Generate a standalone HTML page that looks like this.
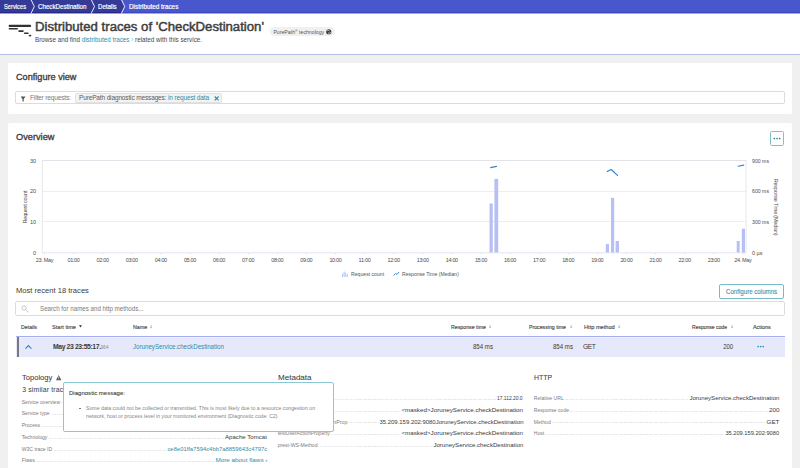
<!DOCTYPE html>
<html><head><meta charset="utf-8">
<style>
*{box-sizing:border-box;margin:0;padding:0}
html,body{width:800px;height:468px;overflow:hidden}
body{background:#f0f0f0;font-family:"Liberation Sans",sans-serif;color:#454646;position:relative}
.a{position:absolute;white-space:nowrap}
.card{position:absolute;left:8px;width:784px;background:#fff;border-radius:2px}
.inp{position:absolute;border:1px solid #dcdcdc;border-radius:2px;background:#fff}
.dots{position:absolute;height:1px;background:repeating-linear-gradient(90deg,#e9e9e9 0,#e9e9e9 1.5px,#f9f9f9 1.5px,#f9f9f9 2.5px)}
.teal{color:#2c8fa8}
</style></head><body>

<svg class="a" style="left:0;top:0" width="800" height="14">
<rect x="0" y="0" width="800" height="12" fill="#4858cc"/>
<rect x="0" y="12" width="800" height="1" fill="#3a48c6"/>
<rect x="0" y="13" width="800" height="1" fill="#a3aae2"/>
<polygon points="0,0 121.4,0 124.7,6.5 121.4,13 0,13" fill="#353a96"/>
<rect x="0" y="12" width="121.5" height="1" fill="#23298a"/>
<rect x="0" y="13" width="121.5" height="1" fill="#9da0cc"/>
<polyline points="31,-0.5 34.3,6.5 31,13.5" fill="none" stroke="#fff" stroke-width="0.9"/>
<polyline points="91.2,-0.5 94.5,6.5 91.2,13.5" fill="none" stroke="#fff" stroke-width="0.9"/>
<polyline points="121.4,-0.5 124.7,6.5 121.4,13.5" fill="none" stroke="#fff" stroke-width="0.9"/>
</svg>
<div class="a" style="left:0;top:14px;width:800px;height:40px;background:#fff"></div>
<div class="a" style="left:0;top:54px;width:800px;height:1px;background:#b8bfe6"></div>

<div class="a" style="top:2.80px;font-size:7.00px;line-height:7.00px;color:#fff;transform:scaleX(0.8196);transform-origin:left;left:4.00px;-webkit-text-stroke:0.2px #fff;">Services</div>
<div class="a" style="top:2.80px;font-size:7.00px;line-height:7.00px;color:#fff;transform:scaleX(0.8840);transform-origin:left;left:37.70px;-webkit-text-stroke:0.2px #fff;">CheckDestination</div>
<div class="a" style="top:2.80px;font-size:7.00px;line-height:7.00px;color:#fff;transform:scaleX(0.8693);transform-origin:left;left:98.00px;-webkit-text-stroke:0.2px #fff;">Details</div>
<div class="a" style="top:2.80px;font-size:7.00px;line-height:7.00px;color:#fff;transform:scaleX(0.9052);transform-origin:left;left:128.50px;-webkit-text-stroke:0.2px #fff;">Distributed traces</div>
<svg class="a" style="left:0;top:13px" width="40" height="41">
<rect x="8.6" y="11.8" width="22.5" height="2.1" rx="1" fill="#333"/>
<rect x="8.6" y="15" width="9.4" height="1.6" rx="0.8" fill="#333"/>
<rect x="18.2" y="17.3" width="5.6" height="1.6" rx="0.8" fill="#333"/>
<rect x="23.8" y="19.5" width="4.9" height="1.6" rx="0.8" fill="#333"/>
<rect x="28.7" y="21.8" width="2.6" height="1.6" rx="0.8" fill="#333"/>
</svg>
<div class="a" style="top:20.20px;font-size:12.30px;line-height:14.00px;color:#3d3d3d;transform:scaleX(1.0706);transform-origin:left;left:35.00px;-webkit-text-stroke:0.45px #3d3d3d;">Distributed traces of 'CheckDestination'</div>
<div class="a" style="top:35.60px;font-size:6.50px;line-height:7.00px;color:#454646;transform:scaleX(0.9650);transform-origin:left;left:35.00px;">Browse and find <span class="teal">distributed traces</span> <span style="color:#7fc0d0">&#8250;</span> related with this service.</div>
<div class="a" style="left:269.7px;top:27.4px;width:65.6px;height:8.8px;border-radius:4.4px;background:#f0f0f0"></div>
<div class="a" style="left:273.4px;top:27.4px;font-size:5.2px;line-height:8.8px;color:#555">PurePath<span style="font-size:3.5px;vertical-align:1.5px">&#174;</span> technology</div>
<svg class="a" style="left:325.8px;top:28.8px" width="6" height="6"><circle cx="2.75" cy="2.75" r="2.6" fill="#333"/><path d="M0.8,2.2 C1.5,1.2 3,1 3.6,2 M1.9,3.5 C2.5,4.5 4,4.3 4.7,3.3" fill="none" stroke="#f0f0f0" stroke-width="0.8"/></svg>

<div class="card" style="top:63px;height:51.3px"></div>
<div class="a" style="top:72.00px;font-size:8.85px;line-height:10.00px;color:#3a3a3a;transform:scaleX(1.0335);transform-origin:left;left:15.80px;-webkit-text-stroke:0.3px #3a3a3a;">Configure view</div>
<div class="inp" style="left:15.4px;top:91.3px;width:769.6px;height:13.2px"></div>
<svg class="a" style="left:20px;top:95.5px" width="7" height="7"><path d="M0.6,0.6 H5.6 L3.7,3 V5.6 H2.5 V3 Z" fill="#555"/></svg>
<div class="a" style="left:30px;top:93.5px;font-size:6.7px;letter-spacing:-0.22px;line-height:8px;color:#7a7a7a">Filter requests:</div>
<div class="a" style="left:75px;top:93px;width:146.6px;height:9.6px;background:#f3f3f3;border:1px solid #e0e0e0;border-radius:1.5px"></div>
<div class="a" style="left:79px;top:93.7px;font-size:6.5px;letter-spacing:-0.14px;line-height:8px;color:#5a5a5a">PurePath diagnostic messages: <span class="teal">in request data</span></div>
<svg class="a" style="left:213.5px;top:95.5px" width="6" height="5"><path d="M0.7,0.5 L4.6,4.4 M4.6,0.5 L0.7,4.4" stroke="#2c8fa8" stroke-width="1.1"/></svg>

<div class="card" style="top:123.3px;height:360px"></div>
<div class="a" style="top:131.70px;font-size:8.85px;line-height:10.00px;color:#3a3a3a;transform:scaleX(1.0439);transform-origin:left;left:15.80px;-webkit-text-stroke:0.3px #3a3a3a;">Overview</div>
<div class="a" style="left:770px;top:131px;width:14px;height:14.5px;border:1px solid #86bfcc;border-radius:1.5px"></div>
<svg class="a" style="left:773px;top:136.5px" width="9" height="3"><circle cx="1.3" cy="1.5" r="0.85" fill="#2b7f94"/><circle cx="4" cy="1.5" r="0.85" fill="#2b7f94"/><circle cx="6.7" cy="1.5" r="0.85" fill="#2b7f94"/></svg>
<svg class="a" style="left:0;top:150px" width="800" height="120">
<rect x="42" y="10" width="704" height="1" fill="#e2e3e8"/>
<rect x="42" y="41" width="704" height="1" fill="#eeeeee"/>
<rect x="42" y="71" width="704" height="1" fill="#eeeeee"/>
<rect x="42" y="102.3" width="704" height="1" fill="#e2e7f0"/>
<rect x="41.8" y="10" width="0.9" height="93" fill="#e4e6ec"/>
<rect x="745.6" y="10" width="0.9" height="93" fill="#e4e6ec"/>
<rect x="44.25" y="103" width="0.7" height="1.5" fill="#d8dde6"/>
<rect x="73.35" y="103" width="0.7" height="1.5" fill="#d8dde6"/>
<rect x="102.45" y="103" width="0.7" height="1.5" fill="#d8dde6"/>
<rect x="131.55" y="103" width="0.7" height="1.5" fill="#d8dde6"/>
<rect x="160.65" y="103" width="0.7" height="1.5" fill="#d8dde6"/>
<rect x="189.75" y="103" width="0.7" height="1.5" fill="#d8dde6"/>
<rect x="218.85" y="103" width="0.7" height="1.5" fill="#d8dde6"/>
<rect x="247.95" y="103" width="0.7" height="1.5" fill="#d8dde6"/>
<rect x="277.05" y="103" width="0.7" height="1.5" fill="#d8dde6"/>
<rect x="306.15" y="103" width="0.7" height="1.5" fill="#d8dde6"/>
<rect x="335.25" y="103" width="0.7" height="1.5" fill="#d8dde6"/>
<rect x="364.35" y="103" width="0.7" height="1.5" fill="#d8dde6"/>
<rect x="393.45" y="103" width="0.7" height="1.5" fill="#d8dde6"/>
<rect x="422.55" y="103" width="0.7" height="1.5" fill="#d8dde6"/>
<rect x="451.65" y="103" width="0.7" height="1.5" fill="#d8dde6"/>
<rect x="480.75" y="103" width="0.7" height="1.5" fill="#d8dde6"/>
<rect x="509.85" y="103" width="0.7" height="1.5" fill="#d8dde6"/>
<rect x="538.95" y="103" width="0.7" height="1.5" fill="#d8dde6"/>
<rect x="568.05" y="103" width="0.7" height="1.5" fill="#d8dde6"/>
<rect x="597.15" y="103" width="0.7" height="1.5" fill="#d8dde6"/>
<rect x="626.25" y="103" width="0.7" height="1.5" fill="#d8dde6"/>
<rect x="655.35" y="103" width="0.7" height="1.5" fill="#d8dde6"/>
<rect x="684.45" y="103" width="0.7" height="1.5" fill="#d8dde6"/>
<rect x="713.55" y="103" width="0.7" height="1.5" fill="#d8dde6"/>
<rect x="742.65" y="103" width="0.7" height="1.5" fill="#d8dde6"/>
<rect x="489.5" y="53.5" width="3.3" height="49.0" fill="#b7c0f4"/>
<rect x="494.4" y="28.9" width="3.8" height="73.6" fill="#b7c0f4"/>
<rect x="605.8" y="94.0" width="3.2" height="8.5" fill="#b7c0f4"/>
<rect x="611.0" y="47.8" width="3.2" height="54.7" fill="#b7c0f4"/>
<rect x="615.6" y="91.0" width="3.4" height="11.5" fill="#b7c0f4"/>
<rect x="736.7" y="91.0" width="3.0" height="11.5" fill="#b7c0f4"/>
<rect x="741.8" y="78.7" width="3.2" height="23.8" fill="#b7c0f4"/>
<polyline points="490.7,17.6 496.5,16.4" fill="none" stroke="#3a80cc" stroke-width="1.15" stroke-linecap="round" stroke-linejoin="round"/>
<polyline points="607.2,21.6 611.2,19.5 617.5,25.4" fill="none" stroke="#3a80cc" stroke-width="1.15" stroke-linecap="round" stroke-linejoin="round"/>
<polyline points="738.1,16.2 743.7,15.1" fill="none" stroke="#3a80cc" stroke-width="1.15" stroke-linecap="round" stroke-linejoin="round"/>
</svg>
<div class="a" style="top:256.90px;font-size:5.50px;line-height:6.00px;color:#4d4d4d;left:44.44px;width:60px;margin-left:-30px;text-align:center;letter-spacing:-0.32px;">23. May</div>
<div class="a" style="top:256.90px;font-size:5.50px;line-height:6.00px;color:#4d4d4d;left:73.52px;width:60px;margin-left:-30px;text-align:center;letter-spacing:-0.35px;">01:00</div>
<div class="a" style="top:256.90px;font-size:5.50px;line-height:6.00px;color:#4d4d4d;left:102.62px;width:60px;margin-left:-30px;text-align:center;letter-spacing:-0.35px;">02:00</div>
<div class="a" style="top:256.90px;font-size:5.50px;line-height:6.00px;color:#4d4d4d;left:131.72px;width:60px;margin-left:-30px;text-align:center;letter-spacing:-0.35px;">03:00</div>
<div class="a" style="top:256.90px;font-size:5.50px;line-height:6.00px;color:#4d4d4d;left:160.82px;width:60px;margin-left:-30px;text-align:center;letter-spacing:-0.35px;">04:00</div>
<div class="a" style="top:256.90px;font-size:5.50px;line-height:6.00px;color:#4d4d4d;left:189.92px;width:60px;margin-left:-30px;text-align:center;letter-spacing:-0.35px;">05:00</div>
<div class="a" style="top:256.90px;font-size:5.50px;line-height:6.00px;color:#4d4d4d;left:219.02px;width:60px;margin-left:-30px;text-align:center;letter-spacing:-0.35px;">06:00</div>
<div class="a" style="top:256.90px;font-size:5.50px;line-height:6.00px;color:#4d4d4d;left:248.12px;width:60px;margin-left:-30px;text-align:center;letter-spacing:-0.35px;">07:00</div>
<div class="a" style="top:256.90px;font-size:5.50px;line-height:6.00px;color:#4d4d4d;left:277.22px;width:60px;margin-left:-30px;text-align:center;letter-spacing:-0.35px;">08:00</div>
<div class="a" style="top:256.90px;font-size:5.50px;line-height:6.00px;color:#4d4d4d;left:306.32px;width:60px;margin-left:-30px;text-align:center;letter-spacing:-0.35px;">09:00</div>
<div class="a" style="top:256.90px;font-size:5.50px;line-height:6.00px;color:#4d4d4d;left:335.42px;width:60px;margin-left:-30px;text-align:center;letter-spacing:-0.35px;">10:00</div>
<div class="a" style="top:256.90px;font-size:5.50px;line-height:6.00px;color:#4d4d4d;left:364.56px;width:60px;margin-left:-30px;text-align:center;letter-spacing:-0.27px;">11:00</div>
<div class="a" style="top:256.90px;font-size:5.50px;line-height:6.00px;color:#4d4d4d;left:393.62px;width:60px;margin-left:-30px;text-align:center;letter-spacing:-0.35px;">12:00</div>
<div class="a" style="top:256.90px;font-size:5.50px;line-height:6.00px;color:#4d4d4d;left:422.72px;width:60px;margin-left:-30px;text-align:center;letter-spacing:-0.35px;">13:00</div>
<div class="a" style="top:256.90px;font-size:5.50px;line-height:6.00px;color:#4d4d4d;left:451.82px;width:60px;margin-left:-30px;text-align:center;letter-spacing:-0.35px;">14:00</div>
<div class="a" style="top:256.90px;font-size:5.50px;line-height:6.00px;color:#4d4d4d;left:480.92px;width:60px;margin-left:-30px;text-align:center;letter-spacing:-0.35px;">15:00</div>
<div class="a" style="top:256.90px;font-size:5.50px;line-height:6.00px;color:#4d4d4d;left:510.02px;width:60px;margin-left:-30px;text-align:center;letter-spacing:-0.35px;">16:00</div>
<div class="a" style="top:256.90px;font-size:5.50px;line-height:6.00px;color:#4d4d4d;left:539.12px;width:60px;margin-left:-30px;text-align:center;letter-spacing:-0.35px;">17:00</div>
<div class="a" style="top:256.90px;font-size:5.50px;line-height:6.00px;color:#4d4d4d;left:568.22px;width:60px;margin-left:-30px;text-align:center;letter-spacing:-0.35px;">18:00</div>
<div class="a" style="top:256.90px;font-size:5.50px;line-height:6.00px;color:#4d4d4d;left:597.32px;width:60px;margin-left:-30px;text-align:center;letter-spacing:-0.35px;">19:00</div>
<div class="a" style="top:256.90px;font-size:5.50px;line-height:6.00px;color:#4d4d4d;left:626.42px;width:60px;margin-left:-30px;text-align:center;letter-spacing:-0.35px;">20:00</div>
<div class="a" style="top:256.90px;font-size:5.50px;line-height:6.00px;color:#4d4d4d;left:655.52px;width:60px;margin-left:-30px;text-align:center;letter-spacing:-0.35px;">21:00</div>
<div class="a" style="top:256.90px;font-size:5.50px;line-height:6.00px;color:#4d4d4d;left:684.62px;width:60px;margin-left:-30px;text-align:center;letter-spacing:-0.35px;">22:00</div>
<div class="a" style="top:256.90px;font-size:5.50px;line-height:6.00px;color:#4d4d4d;left:713.72px;width:60px;margin-left:-30px;text-align:center;letter-spacing:-0.35px;">23:00</div>
<div class="a" style="top:256.90px;font-size:5.50px;line-height:6.00px;color:#4d4d4d;left:742.84px;width:60px;margin-left:-30px;text-align:center;letter-spacing:-0.32px;">24. May</div>
<div class="a" style="top:157.70px;font-size:5.50px;line-height:6.00px;color:#4d4d4d;right:764.00px;">30</div>
<div class="a" style="top:188.40px;font-size:5.50px;line-height:6.00px;color:#4d4d4d;right:764.00px;">20</div>
<div class="a" style="top:219.00px;font-size:5.50px;line-height:6.00px;color:#4d4d4d;right:764.00px;">10</div>
<div class="a" style="top:249.70px;font-size:5.50px;line-height:6.00px;color:#4d4d4d;right:764.00px;">0</div>
<div class="a" style="top:157.70px;font-size:5.50px;line-height:6.00px;color:#4d4d4d;transform:scaleX(0.9425);transform-origin:left;left:752.00px;">900 ms</div>
<div class="a" style="top:188.40px;font-size:5.50px;line-height:6.00px;color:#4d4d4d;transform:scaleX(0.9425);transform-origin:left;left:752.00px;">600 ms</div>
<div class="a" style="top:219.00px;font-size:5.50px;line-height:6.00px;color:#4d4d4d;transform:scaleX(0.9425);transform-origin:left;left:752.00px;">300 ms</div>
<div class="a" style="top:249.70px;font-size:5.50px;line-height:6.00px;color:#4d4d4d;left:752.00px;">0 µs</div>
<div class="a" style="left:25px;top:206.5px;width:60px;margin-left:-30px;margin-top:-3px;text-align:center;line-height:6px;font-size:5.5px;letter-spacing:-0.2px;color:#4d4d4d;transform:rotate(-90deg)">Request count</div>
<div class="a" style="left:776px;top:206.6px;width:80px;margin-left:-40px;margin-top:-3px;text-align:center;line-height:6px;font-size:5.5px;letter-spacing:-0.22px;color:#4d4d4d;transform:rotate(90deg)">Response Time (Median)</div>
<svg class="a" style="left:342px;top:271px" width="8" height="6"><rect x="0" y="2.5" width="1" height="3.5" fill="#b7c0f4"/><rect x="1.6" y="0.5" width="1" height="5.5" fill="#b7c0f4"/><rect x="3.2" y="1.5" width="1" height="4.5" fill="#b7c0f4"/><rect x="4.8" y="3" width="1" height="3" fill="#b7c0f4"/></svg>
<svg class="a" style="left:393px;top:271px" width="8" height="6"><polyline points="0.5,4.5 2.5,2.5 4,3.5 6,1" fill="none" stroke="#2e7fcf" stroke-width="0.9"/></svg>
<div class="a" style="top:271.00px;font-size:5.17px;line-height:6.00px;color:#555;transform:scaleX(0.9958);transform-origin:left;left:350.60px;">Request count</div>
<div class="a" style="top:271.00px;font-size:5.17px;line-height:6.00px;color:#555;transform:scaleX(0.9869);transform-origin:left;left:402.00px;">Response Time (Median)</div>
<div class="a" style="top:286.00px;font-size:7.70px;line-height:9.00px;color:#3c3c3c;transform:scaleX(0.9860);transform-origin:left;left:16.00px;">Most recent 18 traces</div>
<div class="a" style="left:719.2px;top:284.3px;width:65.3px;height:14.4px;border:1px solid #79b9c8;border-radius:2px"></div>
<div class="a" style="top:287.70px;font-size:7.10px;line-height:8.00px;color:#3f93a8;transform:scaleX(0.8649);transform-origin:left;left:726.00px;-webkit-text-stroke:0.12px #3f93a8;">Configure columns</div>
<div class="inp" style="left:15.3px;top:301.2px;width:769.3px;height:15px"></div>
<svg class="a" style="left:21px;top:305px" width="9" height="9"><circle cx="3" cy="3" r="2.1" fill="none" stroke="#bbb" stroke-width="0.8"/><line x1="4.6" y1="4.6" x2="7.6" y2="7.4" stroke="#bbb" stroke-width="0.9"/></svg>
<div class="a" style="top:304.80px;font-size:6.60px;line-height:7.00px;color:#7a7a7a;transform:scaleX(0.9382);transform-origin:left;left:39.80px;">Search for names and http methods...</div>
<div class="a" style="top:324.00px;font-size:5.60px;line-height:6.00px;color:#4a4a4a;transform:scaleX(0.9347);transform-origin:left;left:21.00px;-webkit-text-stroke:0.15px #4a4a4a;">Details</div>
<div class="a" style="top:324.00px;font-size:5.60px;line-height:6.00px;color:#4a4a4a;transform:scaleX(1.0016);transform-origin:left;left:52.00px;-webkit-text-stroke:0.15px #4a4a4a;">Start time</div>
<svg class="a" style="left:79.3px;top:325.2px" width="4" height="3"><path d="M0,0.3 H3 L1.5,2.5 Z" fill="#333"/></svg>
<div class="a" style="top:324.00px;font-size:5.60px;line-height:6.00px;color:#4a4a4a;transform:scaleX(0.9539);transform-origin:left;left:132.50px;-webkit-text-stroke:0.15px #4a4a4a;">Name</div>
<svg class="a" style="left:150.2px;top:324.8px" width="3" height="4"><path d="M1.1,0 L0.1,1.4 H2.1 Z M1.1,3.4 L0.1,2 H2.1 Z" fill="#a8a8a8"/></svg>
<div class="a" style="top:324.00px;font-size:5.60px;line-height:6.00px;color:#4a4a4a;transform:scaleX(0.9370);transform-origin:left;left:450.50px;-webkit-text-stroke:0.15px #4a4a4a;">Response time</div>
<svg class="a" style="left:489.0px;top:324.8px" width="3" height="4"><path d="M1.1,0 L0.1,1.4 H2.1 Z M1.1,3.4 L0.1,2 H2.1 Z" fill="#a8a8a8"/></svg>
<div class="a" style="top:324.00px;font-size:5.60px;line-height:6.00px;color:#4a4a4a;transform:scaleX(0.9288);transform-origin:left;left:528.70px;-webkit-text-stroke:0.15px #4a4a4a;">Processing time</div>
<svg class="a" style="left:569.5px;top:324.8px" width="3" height="4"><path d="M1.1,0 L0.1,1.4 H2.1 Z M1.1,3.4 L0.1,2 H2.1 Z" fill="#a8a8a8"/></svg>
<div class="a" style="top:324.00px;font-size:5.60px;line-height:6.00px;color:#4a4a4a;transform:scaleX(1.0080);transform-origin:left;left:583.70px;-webkit-text-stroke:0.15px #4a4a4a;">Http method</div>
<svg class="a" style="left:618.0px;top:324.8px" width="3" height="4"><path d="M1.1,0 L0.1,1.4 H2.1 Z M1.1,3.4 L0.1,2 H2.1 Z" fill="#a8a8a8"/></svg>
<div class="a" style="top:324.00px;font-size:5.60px;line-height:6.00px;color:#4a4a4a;transform:scaleX(0.8994);transform-origin:left;left:691.60px;-webkit-text-stroke:0.15px #4a4a4a;">Response code</div>
<svg class="a" style="left:730.6px;top:324.8px" width="3" height="4"><path d="M1.1,0 L0.1,1.4 H2.1 Z M1.1,3.4 L0.1,2 H2.1 Z" fill="#a8a8a8"/></svg>
<div class="a" style="top:324.00px;font-size:5.60px;line-height:6.00px;color:#4a4a4a;transform:scaleX(0.9584);transform-origin:left;left:753.00px;-webkit-text-stroke:0.15px #4a4a4a;">Actions</div>
<div class="a" style="left:15.5px;top:335.6px;width:769.1px;height:21px;background:#e6e9fb;border-top:1.4px solid #a3adf2;box-shadow:inset 0 1px 0 #eff1fd"></div>
<div class="a" style="left:16.8px;top:336.8px;width:2.2px;height:19.9px;background:#7a7a7a"></div>
<svg class="a" style="left:24px;top:343px" width="10" height="7"><polyline points="1.5,5.6 4.4,2.6 7.4,5.6" fill="none" stroke="#2c8fa8" stroke-width="1.2"/></svg>
<div class="a" style="top:342.70px;font-size:6.83px;line-height:7.00px;color:#3a3a3a;font-weight:bold;left:53.00px;letter-spacing:-0.39px;">May 23 23:55:17.<span style="font-size:4.6px;font-weight:normal;color:#888;letter-spacing:0.05px">964</span></div>
<div class="a" style="top:342.60px;font-size:6.69px;line-height:7.00px;color:#2f8ea6;transform:scaleX(0.9200);transform-origin:left;left:133.00px;">JoruneyService.checkDestination</div>
<div class="a" style="top:342.60px;font-size:6.69px;line-height:7.00px;color:#3a3a3a;transform:scaleX(0.9116);transform-origin:right;right:307.50px;">854 ms</div>
<div class="a" style="top:342.60px;font-size:6.69px;line-height:7.00px;color:#3a3a3a;transform:scaleX(0.9116);transform-origin:right;right:227.50px;">854 ms</div>
<div class="a" style="top:342.60px;font-size:6.69px;line-height:7.00px;color:#3a3a3a;left:583.00px;letter-spacing:-0.5px;">GET</div>
<div class="a" style="top:342.60px;font-size:6.69px;line-height:7.00px;color:#3a3a3a;transform:scaleX(0.8959);transform-origin:right;right:67.00px;">200</div>
<svg class="a" style="left:757px;top:345px" width="9" height="3"><circle cx="1.2" cy="1.5" r="0.85" fill="#2c8fa8"/><circle cx="3.7" cy="1.5" r="0.85" fill="#2c8fa8"/><circle cx="6.2" cy="1.5" r="0.85" fill="#2c8fa8"/></svg>
<div class="a" style="top:373.30px;font-size:7.70px;line-height:9.00px;color:#3a3a3a;transform:scaleX(0.9830);transform-origin:left;left:22.20px;-webkit-text-stroke:0.05px #3a3a3a;">Topology</div>
<svg class="a" style="left:55.8px;top:374.9px" width="6" height="6"><path d="M2.7,0.1 L5.4,5.2 L0.0,5.2 Z" fill="#5a5a5a"/><rect x="2.5" y="1.5" width="0.6" height="1.8" fill="#fff"/><rect x="2.5" y="3.7" width="0.6" height="0.6" fill="#fff"/></svg>
<div class="a" style="top:386.20px;font-size:6.90px;line-height:7.00px;color:#3a3a3a;left:22.20px;letter-spacing:0.15px;">3 similar traces</div>
<div class="a" style="top:373.30px;font-size:7.70px;line-height:9.00px;color:#3a3a3a;transform:scaleX(1.0466);transform-origin:left;left:277.70px;-webkit-text-stroke:0.05px #3a3a3a;">Metadata</div>
<div class="a" style="top:373.30px;font-size:7.70px;line-height:9.00px;color:#3a3a3a;transform:scaleX(0.9053);transform-origin:left;left:533.80px;-webkit-text-stroke:0.05px #3a3a3a;">HTTP</div>
<div class="dots" style="left:21.7px;width:245.3px;top:402px"></div>
<div class="a" style="top:398.50px;font-size:5.09px;line-height:6.00px;color:#7b7b7b;left:21.70px;background:#fff;padding-right:1px;">Service overview</div>
<div class="dots" style="left:21.7px;width:245.3px;top:414px"></div>
<div class="a" style="top:410.30px;font-size:5.09px;line-height:6.00px;color:#7b7b7b;left:21.70px;background:#fff;padding-right:1px;">Service type</div>
<div class="dots" style="left:21.7px;width:245.3px;top:426px"></div>
<div class="a" style="top:422.10px;font-size:5.09px;line-height:6.00px;color:#7b7b7b;left:21.70px;background:#fff;padding-right:1px;">Process</div>
<div class="dots" style="left:21.7px;width:245.3px;top:438px"></div>
<div class="a" style="top:433.80px;font-size:5.09px;line-height:6.00px;color:#7b7b7b;left:21.70px;background:#fff;padding-right:1px;">Technology</div>
<div class="a" style="top:432.80px;font-size:6.25px;line-height:7.00px;color:#3a3a3a;transform:scaleX(0.9775);transform-origin:right;right:533.00px;background:#fff;padding-left:1px;">Apache Tomcat</div>
<div class="dots" style="left:21.7px;width:245.3px;top:450px"></div>
<div class="a" style="top:445.70px;font-size:5.09px;line-height:6.00px;color:#7b7b7b;left:21.70px;background:#fff;padding-right:1px;">W3C trace ID</div>
<div class="a" style="top:444.70px;font-size:6.25px;line-height:7.00px;color:#2f8ea6;transform:scaleX(0.9394);transform-origin:right;right:533.00px;background:#fff;padding-left:1px;">ce8e01ffa7594c4bb7a8859643c4797c</div>
<div class="dots" style="left:21.7px;width:245.3px;top:461px"></div>
<div class="a" style="top:457.40px;font-size:5.09px;line-height:6.00px;color:#7b7b7b;left:21.70px;background:#fff;padding-right:1px;">Flaws</div>
<div class="a" style="top:456.40px;font-size:6.25px;line-height:7.00px;color:#2f8ea6;transform:scaleX(1.0115);transform-origin:right;right:533.00px;background:#fff;padding-left:1px;">More about flaws ›</div>
<div class="dots" style="left:277.7px;width:245.3px;top:399px"></div>
<div class="a" style="top:395.00px;font-size:5.09px;line-height:6.00px;color:#7b7b7b;left:277.70px;background:#fff;padding-right:1px;">testAddressProp</div>
<div class="a" style="top:394.00px;font-size:6.25px;line-height:7.00px;color:#3a3a3a;transform:scaleX(0.7864);transform-origin:right;right:277.00px;background:#fff;padding-left:1px;">17.112.20.0</div>
<div class="dots" style="left:277.7px;width:245.3px;top:411px"></div>
<div class="a" style="top:406.70px;font-size:5.09px;line-height:6.00px;color:#7b7b7b;left:277.70px;background:#fff;padding-right:1px;">testServiceProp</div>
<div class="a" style="top:405.70px;font-size:6.25px;line-height:7.00px;color:#3a3a3a;right:277.00px;background:#fff;padding-left:1px;">&lt;masked&gt;JoruneyService.checkDestination</div>
<div class="dots" style="left:277.7px;width:245.3px;top:422px"></div>
<div class="a" style="top:418.50px;font-size:5.09px;line-height:6.00px;color:#7b7b7b;transform:scaleX(1.0364);transform-origin:left;left:277.70px;background:#fff;padding-right:1px;">testHostAndPortLocationProp</div>
<div class="a" style="top:417.50px;font-size:6.25px;line-height:7.00px;color:#3a3a3a;transform:scaleX(0.9505);transform-origin:right;right:277.00px;background:#fff;padding-left:1px;">35.209.159.202:9080JoruneyService.checkDestination</div>
<div class="dots" style="left:277.7px;width:245.3px;top:434px"></div>
<div class="a" style="top:430.30px;font-size:5.09px;line-height:6.00px;color:#7b7b7b;left:277.70px;background:#fff;padding-right:1px;">testUserActionProperty</div>
<div class="a" style="top:429.30px;font-size:6.25px;line-height:7.00px;color:#3a3a3a;right:277.00px;background:#fff;padding-left:1px;">&lt;masked&gt;JoruneyService.checkDestination</div>
<div class="dots" style="left:277.7px;width:245.3px;top:446px"></div>
<div class="a" style="top:441.90px;font-size:5.09px;line-height:6.00px;color:#7b7b7b;left:277.70px;background:#fff;padding-right:1px;">prest-WS-Method</div>
<div class="a" style="top:440.90px;font-size:6.25px;line-height:7.00px;color:#3a3a3a;transform:scaleX(0.9739);transform-origin:right;right:277.00px;background:#fff;padding-left:1px;">JoruneyService.checkDestination</div>
<div class="dots" style="left:533.8px;width:245.6px;top:399px"></div>
<div class="a" style="top:395.00px;font-size:5.09px;line-height:6.00px;color:#7b7b7b;left:533.80px;background:#fff;padding-right:1px;">Relative URL</div>
<div class="a" style="top:394.00px;font-size:6.25px;line-height:7.00px;color:#3a3a3a;transform:scaleX(0.9739);transform-origin:right;right:20.60px;background:#fff;padding-left:1px;">JoruneyService.checkDestination</div>
<div class="dots" style="left:533.8px;width:245.6px;top:411px"></div>
<div class="a" style="top:406.80px;font-size:5.09px;line-height:6.00px;color:#7b7b7b;left:533.80px;background:#fff;padding-right:1px;">Response code</div>
<div class="a" style="top:405.80px;font-size:6.25px;line-height:7.00px;color:#3a3a3a;right:20.60px;background:#fff;padding-left:1px;">200</div>
<div class="dots" style="left:533.8px;width:245.6px;top:422px"></div>
<div class="a" style="top:418.50px;font-size:5.09px;line-height:6.00px;color:#7b7b7b;left:533.80px;background:#fff;padding-right:1px;">Method</div>
<div class="a" style="top:417.50px;font-size:6.25px;line-height:7.00px;color:#3a3a3a;right:20.60px;background:#fff;padding-left:1px;">GET</div>
<div class="dots" style="left:533.8px;width:245.6px;top:434px"></div>
<div class="a" style="top:430.30px;font-size:5.09px;line-height:6.00px;color:#7b7b7b;left:533.80px;background:#fff;padding-right:1px;">Host</div>
<div class="a" style="top:429.30px;font-size:6.25px;line-height:7.00px;color:#3a3a3a;transform:scaleX(0.9089);transform-origin:right;right:20.60px;background:#fff;padding-left:1px;">35.209.159.202:9080</div>
<div class="a" style="left:63px;top:382px;width:271px;height:50px;background:#fff;border:1px solid #8cc7d5;border-radius:2px"></div>
<div class="a" style="top:388.80px;font-size:6.25px;line-height:7.00px;color:#3f3f3f;transform:scaleX(0.9653);transform-origin:left;left:68.50px;-webkit-text-stroke:0.1px #3f3f3f;">Diagnostic message:</div>
<div class="a" style="left:79px;top:407.5px;width:1.5px;height:1.5px;background:#777"></div>
<div class="a" style="top:405.00px;font-size:5.52px;line-height:6.00px;color:#858585;transform:scaleX(0.9416);transform-origin:left;left:86.00px;">Some data could not be collected or transmitted. This is most likely due to a resource congestion on</div>
<div class="a" style="top:413.00px;font-size:5.52px;line-height:6.00px;color:#858585;transform:scaleX(0.9410);transform-origin:left;left:86.00px;">network, host or process level in your monitored environment (Diagnostic code: C2)</div>
</body></html>
